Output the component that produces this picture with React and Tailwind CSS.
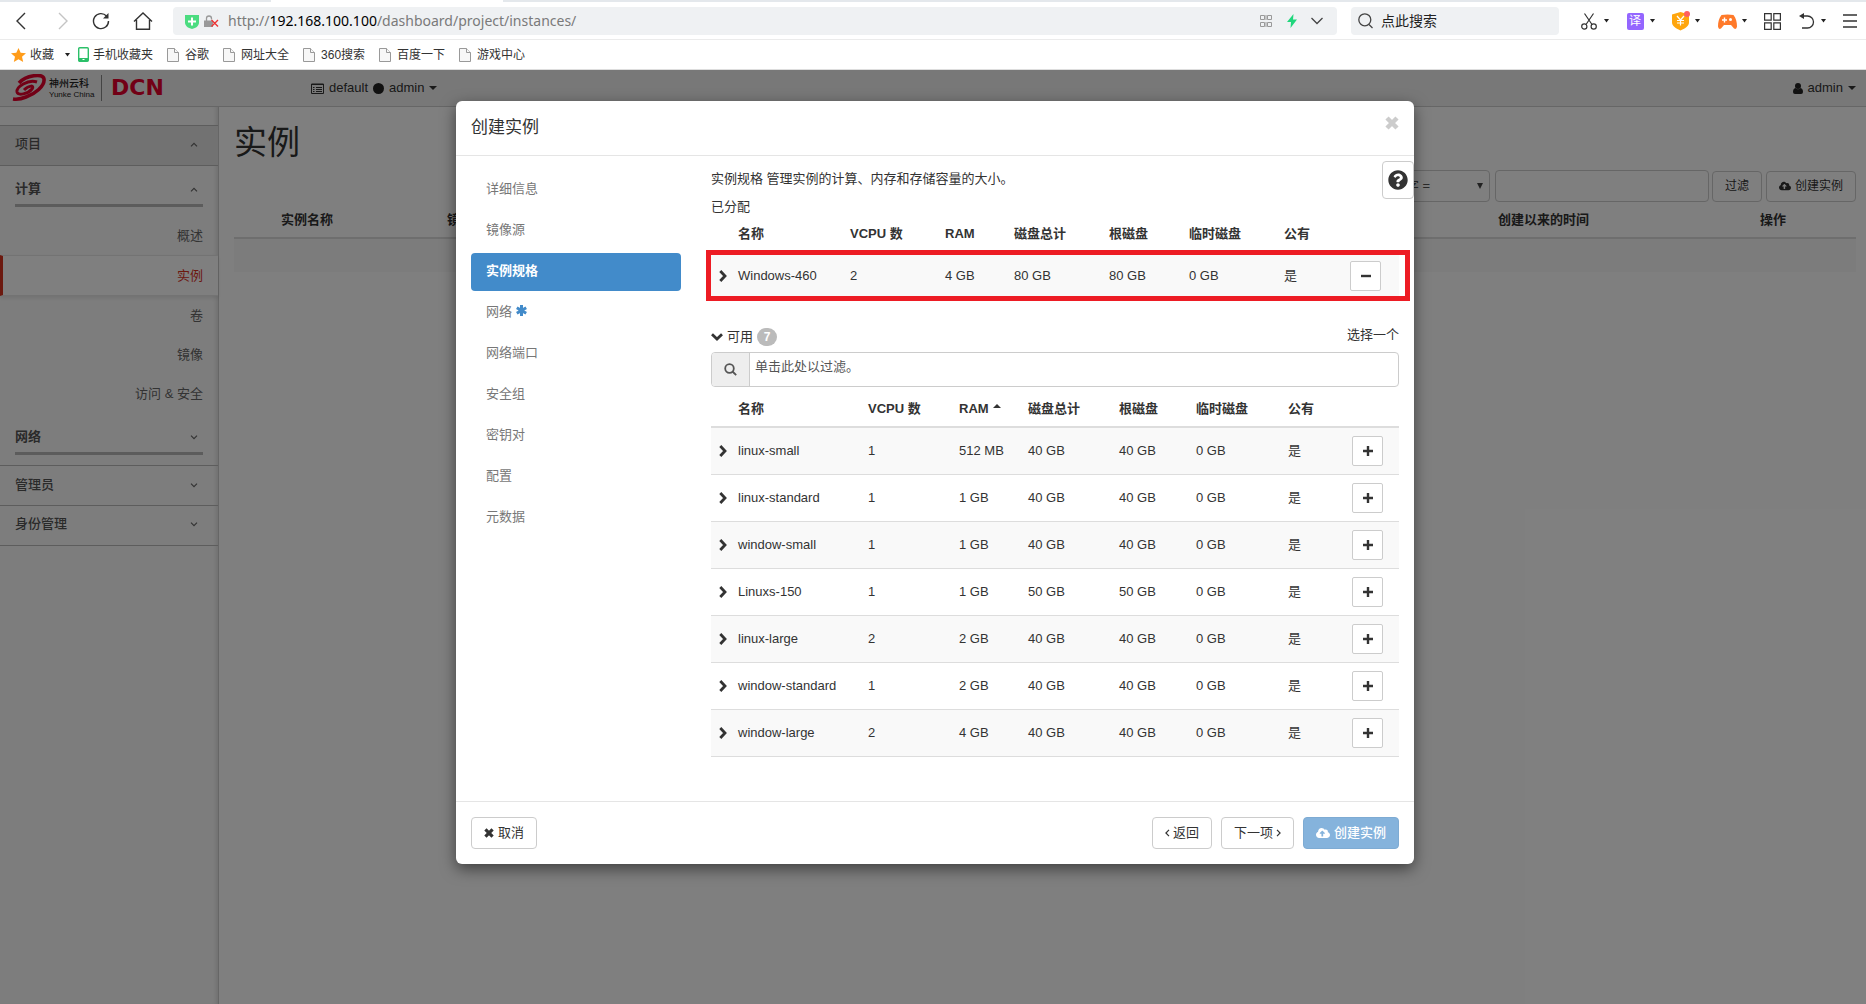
import React, { useState } from "react";
import { FaCloudUploadAlt, FaQuestionCircle } from "react-icons/fa";

const bookmarks = ["谷歌", "网址大全", "360搜索", "百度一下", "游戏中心"];

const steps = [
  { name: "详细信息" },
  { name: "镜像源" },
  { name: "实例规格" },
  { name: "网络", required: true },
  { name: "网络端口" },
  { name: "安全组" },
  { name: "密钥对" },
  { name: "配置" },
  { name: "元数据" },
];

const allocated = [["Windows-460", "2", "4 GB", "80 GB", "80 GB", "0 GB", "是"]];

const available = [
  ["linux-small", "1", "512 MB", "40 GB", "40 GB", "0 GB", "是"],
  ["linux-standard", "1", "1 GB", "40 GB", "40 GB", "0 GB", "是"],
  ["window-small", "1", "1 GB", "40 GB", "40 GB", "0 GB", "是"],
  ["Linuxs-150", "1", "1 GB", "50 GB", "50 GB", "0 GB", "是"],
  ["linux-large", "2", "2 GB", "40 GB", "40 GB", "0 GB", "是"],
  ["window-standard", "1", "2 GB", "40 GB", "40 GB", "0 GB", "是"],
  ["window-large", "2", "4 GB", "40 GB", "40 GB", "0 GB", "是"],
];

const columns = ["名称", "VCPU 数", "RAM", "磁盘总计", "根磁盘", "临时磁盘", "公有"];

const allocatedWidths = [
  "w-[27px]",
  "w-[112px]",
  "w-[95px]",
  "w-[69px]",
  "w-[95px]",
  "w-[80px]",
  "w-[95px]",
  "w-[66px]",
  "w-auto",
];

const availableWidths = [
  "w-[27px]",
  "w-[130px]",
  "w-[91px]",
  "w-[69px]",
  "w-[91px]",
  "w-[77px]",
  "w-[92px]",
  "w-[64px]",
  "w-auto",
];

function Caret() {
  return (
    <svg width="5" height="4" viewBox="0 0 5 4" className="fill-[#222]">
      <path d="M0 0h5L2.500 3.500z" />
    </svg>
  );
}

function MenuCaret() {
  return (
    <svg width="8" height="4" viewBox="0 0 8 4" className="fill-[#333]">
      <path d="M0 0h8L4 4z" />
    </svg>
  );
}

function Cross({ className }) {
  return (
    <svg viewBox="0 0 14 14" fill="none" stroke="currentColor" strokeWidth="4.500" className={className}>
      <path d="m2 2 10 10M12 2 2 12" />
    </svg>
  );
}

function Chevron({ down }) {
  return down ? (
    <svg width="12" height="8" viewBox="0 0 12 8" fill="none" stroke="#333" strokeWidth="2.800">
      <path d="m1 1.300 5 4.700 5-4.700" />
    </svg>
  ) : (
    <svg width="8" height="12" viewBox="0 0 8 12" fill="none" stroke="#333" strokeWidth="2.800">
      <path d="m1.300 1 4.700 5-4.700 5" />
    </svg>
  );
}

function Angle({ left }) {
  return (
    <svg width="5" height="8" viewBox="0 0 5 8" fill="none" stroke="#333" strokeWidth="1.200">
      <path d={left ? "M4 .8.900 4 4 7.200" : "M1 .8 4.100 4 1 7.200"} />
    </svg>
  );
}

function AngleSmall({ up }) {
  return (
    <svg width="8" height="5" viewBox="0 0 8 5" fill="none" stroke="#666" strokeWidth="1.200">
      <path d={up ? "m1 4.300 3-3 3 3" : "m1 .7 3 3 3-3"} />
    </svg>
  );
}

function PageIcon() {
  return (
    <svg width="12" height="14" viewBox="0 0 12 14" className="fill-[#f7f7f7] stroke-[#999]">
      <path d="M.5.5h7l4 4v9H.5z" />
      <path d="M7.500 .5v4h4" />
    </svg>
  );
}

function AddressBar() {
  return (
    <div className="flex h-[38px] items-center border-b border-[#ebebeb] pt-px pr-[9px] pl-4 text-[#222]">
      <div className="flex w-[157px] items-center gap-[23px]">
        <button aria-label="后退">
          <svg width="11" height="18" viewBox="0 0 11 18" fill="none" stroke="#333" strokeWidth="1.400">
            <path d="M9 1 1 9l8 8" />
          </svg>
        </button>
        <button aria-label="前进" className="ml-2">
          <svg width="11" height="18" viewBox="0 0 11 18" fill="none" stroke="#c4c4c4" strokeWidth="1.400">
            <path d="m1 1 8 8-8 8" />
          </svg>
        </button>
        <button aria-label="刷新">
          <svg width="18" height="18" viewBox="0 0 18 18" fill="none" stroke="#333" strokeWidth="1.400">
            <path d="M14.500 4A7.500 7.500 0 1 0 16.500 9" />
            <path d="M16.500 1v5.500H11z" fill="#333" stroke="none" />
          </svg>
        </button>
        <button aria-label="主页">
          <svg width="20" height="18" viewBox="0 0 20 18" fill="none" stroke="#333" strokeWidth="1.400">
            <path d="M1 9.500 10 1l9 8.500M3.500 8v9.200h13V8" />
          </svg>
        </button>
      </div>
      <div className="flex h-7 flex-1 items-center rounded bg-[#eff1f3] pr-[14px] pl-3">
        <svg width="14" height="15" viewBox="0 0 14 15" className="shrink-0">
          <path d="M0 1h14v7.500c0 3.500-3 5.500-7 6.500-4-1-7-3-7-6.500z" fill="#4bdc80" />
          <path d="M7 3.500v8M3 7.500h8" stroke="#fff" strokeWidth="2" />
        </svg>
        <svg width="15" height="13" viewBox="0 0 15 13" className="ml-[5px] shrink-0">
          <path d="M2.500 6V3.500a2.500 2.500 0 0 1 5 0v1" fill="none" stroke="#999" strokeWidth="1.300" />
          <path d="M0 5.500h9V12H0z" fill="#999" />
          <path d="m7.500 5 6.500 6.500m0-6.500-6.500 6.500" stroke="#e33" strokeWidth="1.400" />
        </svg>
        <span className="ml-[9px] flex-1 font-['Noto_Sans','Noto_Sans_CJK_SC',sans-serif] text-sm text-[#7a7a7a]">
          http://<span className="text-black">192.168.100.100</span>/dashboard/project/instances/
        </span>
        <svg width="12" height="12" viewBox="0 0 12 12" fill="none" stroke="#999">
          <path d="M.5.5h4v4h-4zM7.500.5h4v4h-4zM.5 7.500h4v4h-4zM7.500 7.500h4v4h-4zM6 0v5M6 7v5" />
        </svg>
        <svg width="10" height="14" viewBox="0 0 10 14" className="ml-[15px] fill-[#1fd67c]">
          <path d="M6.500 0 0 8h4L3.500 14 10 5.500H6z" />
        </svg>
        <svg width="12" height="8" viewBox="0 0 12 8" fill="none" stroke="#444" strokeWidth="1.300" className="ml-[14px]">
          <path d="m.5 1 5.500 5.500L11.500 1" />
        </svg>
      </div>
      <label className="ml-[14px] flex h-7 w-[208px] items-center gap-2 rounded bg-[#eff1f3] pl-[7px]">
        <svg width="15" height="16" viewBox="0 0 15 16" fill="none" stroke="#444" strokeWidth="1.300">
          <circle cx="6.800" cy="6.800" r="6" />
          <path d="m11 11.500 3.500 3.500" />
        </svg>
        <input
          aria-label="搜索"
          placeholder="点此搜索"
          className="w-32 bg-transparent text-sm outline-none placeholder:text-[#222]"
        />
      </label>
      <div className="flex w-[298px] items-center justify-between pl-[22px]">
        <button aria-label="截图" className="flex items-center gap-[7px]">
          <svg width="16" height="17" viewBox="0 0 16 17" fill="none" stroke="#333" strokeWidth="1.200">
            <path d="m3.500.5 7.500 11M12.500.5 5 11.500" />
            <circle cx="3.300" cy="13.500" r="2.600" />
            <circle cx="12.700" cy="13.500" r="2.600" />
          </svg>
          <Caret />
        </button>
        <button aria-label="翻译" className="flex items-center gap-[6px]">
          <span className="flex h-[17px] w-[17px] items-center justify-center rounded-xs bg-[#9466ff] text-xs leading-none text-white">
            译
          </span>
          <Caret />
        </button>
        <button aria-label="钱包" className="flex items-center gap-[5px]">
          <svg width="18" height="20" viewBox="0 0 18 20">
            <path d="M0 3.500 8.500 1 17 3.500V11c0 4-3 6-8.500 8.500C3 17 0 15 0 11z" fill="#ffa60d" />
            <path d="m5 5 3.500 4L12 5M8.500 9v5.500M5 9.500h7M5 12h7" stroke="#fff" strokeWidth="1.200" fill="none" />
            <circle cx="15" cy="3" r="3" fill="#ff5f5f" />
          </svg>
          <Caret />
        </button>
        <button aria-label="游戏" className="flex items-center gap-[5px]">
          <svg width="19" height="15" viewBox="0 0 19 15">
            <path d="M3.500 1q6-1 12 0C18 4 19 8 19 12.500q-.5 3.500-3 2L13 11H6l-3 3.500q-2.500 1.500-3-2C0 8 1 4 3.500 1z" fill="#ff7a2a" />
            <path d="M6.500 3.500v5M4 6h5" stroke="#fff" strokeWidth="1.400" />
            <circle cx="12.500" cy="5.500" r="1.500" fill="#fff" />
          </svg>
          <Caret />
        </button>
        <button aria-label="应用">
          <svg width="17" height="17" viewBox="0 0 17 17" fill="none" stroke="#333" strokeWidth="1.200">
            <path d="M.6.6h6.600v6.600H.6zM9.800.6h6.600v6.600H9.800zM.6 9.800h6.600v6.600H.6zM9.800 9.800h6.600v6.600H9.800z" />
          </svg>
        </button>
        <button aria-label="撤销" className="flex items-center gap-[6px]">
          <svg width="16" height="16" viewBox="0 0 16 16" fill="none" stroke="#333" strokeWidth="1.300">
            <path d="M2 3h6.500a6 6 0 0 1 0 12H3" />
            <path d="M5 0v6L0 3z" fill="#333" stroke="none" />
          </svg>
          <Caret />
        </button>
        <button aria-label="菜单">
          <svg width="14" height="14" viewBox="0 0 14 14" fill="none" stroke="#333" strokeWidth="1.400">
            <path d="M0 1h14M0 7h14M0 13h14" />
          </svg>
        </button>
      </div>
    </div>
  );
}

function Bookmarks() {
  return (
    <nav className="flex h-[30px] items-center border-b border-[#ddd] pl-[11px] text-xs text-[#333]">
      <a href="#fav" className="flex items-center gap-1">
        <svg width="15" height="14" viewBox="0 0 15 14" className="fill-[#ff9c1a]">
          <path d="m7.500 0 2.200 4.800 5.300.5-4 3.500 1.200 5.200-4.700-2.700L2.800 14 4 8.800 0 5.300l5.300-.5z" />
        </svg>
        收藏
      </a>
      <span className="mr-2 ml-[11px]">
        <Caret />
      </span>
      <a href="#mobile" className="flex items-center gap-1">
        <svg width="11" height="15" viewBox="0 0 11 15">
          <rect x=".7" y=".7" width="9.600" height="13.600" rx="1" fill="#fff" stroke="#2cc069" strokeWidth="1.400" />
          <path d="M1 11h9v3H1z" fill="#2cc069" />
          <path d="M4.500 12.500h2" stroke="#fff" />
        </svg>
        手机收藏夹
      </a>
      {bookmarks.map((name) => (
        <a key={name} href="#bookmark" className="ml-[14px] flex items-center gap-[6px]">
          <PageIcon />
          {name}
        </a>
      ))}
    </nav>
  );
}

function Logo() {
  return (
    <div className="flex items-center text-[#222]">
      <svg width="34" height="28" viewBox="0 0 34 28" fill="none" stroke="#e5002d">
        <path d="M7 9C14 1 31-1 32 5c1 7-9 15-18 18q-7 3-13 2" strokeWidth="3.600" />
        <path d="M25 8C16 5 4 13 5 18c1 4 11 2 15-3 3-4-3-4-8 1" strokeWidth="3" />
      </svg>
      <div className="ml-[3px] w-[43px] text-[10px] leading-[12px] font-medium whitespace-nowrap">
        神州云科
        <div className="text-[8px] leading-[9px]">Yunke China</div>
      </div>
      <div className="mx-[9px] h-[26px] w-px bg-[#888]" />
      <span className="font-['DejaVu_Sans',sans-serif] text-[22px] leading-6 font-bold text-[#e5002d]">DCN</span>
    </div>
  );
}

function SideGroup({ name, open }) {
  return (
    <button className="mx-[15px] flex items-center justify-between border-b-[3px] border-[#b8b8b8] pr-[5px] pb-[6px] font-bold text-[#555]">
      {name}
      <AngleSmall up={open} />
    </button>
  );
}

function Sidebar() {
  return (
    <aside className="flex w-[219px] shrink-0 flex-col border-r border-[#ccc] bg-[#fbfbfb] pt-[18px] text-[13px] leading-[18px] text-[#666] shadow-[inset_-4px_0_5px_-3px_rgba(0,0,0,0.15)]">
      <button className="flex h-[41px] items-center justify-between border-y border-[#bbb] bg-[#e4e4e4] pr-5 pb-[3px] pl-[15px] font-medium text-[#555]">
        项目
        <AngleSmall up />
      </button>
      <div className="flex flex-col pt-[14px]">
        <SideGroup name="计算" open />
        <a href="#overview" className="flex h-12 items-center justify-end pt-[9px] pr-[15px]">
          概述
        </a>
        <a
          href="#instances"
          className="flex h-[41px] items-center justify-end border-y border-l-[3px] border-y-[#e6e6e6] border-l-[#d9331f] bg-white pr-[15px] text-[#d9331f] shadow-[0_2px_4px_rgba(0,0,0,0.1)]"
        >
          实例
        </a>
        <a href="#volumes" className="flex h-[39px] items-center justify-end pr-[15px]">
          卷
        </a>
        <a href="#images" className="flex h-[39px] items-center justify-end pr-[15px]">
          镜像
        </a>
        <a href="#access" className="mb-[15px] flex h-[39px] items-center justify-end pr-[15px]">
          访问 &amp; 安全
        </a>
        <SideGroup name="网络" />
      </div>
      <button className="mt-[10px] flex h-10 items-center justify-between border-t border-[#bbb] pr-5 pb-px pl-[15px] font-medium text-[#555]">
        管理员
        <AngleSmall />
      </button>
      <button className="flex h-[41px] items-center justify-between border-y border-[#bbb] pr-5 pb-[3px] pl-[15px] font-medium text-[#555]">
        身份管理
        <AngleSmall />
      </button>
    </aside>
  );
}

function Dashboard() {
  return (
    <div className="flex flex-1 flex-col bg-white text-[13px] text-[#333]">
      <header className="flex h-[37px] items-center border-b border-[#ccc] bg-[#f0f0f0] pr-[10px] pl-3">
        <div className="w-[299px]">
          <Logo />
        </div>
        <button className="flex items-center gap-[5px]">
          <svg width="13" height="11" viewBox="0 0 13 11" fill="none" stroke="#333">
            <path d="M.5 1h12v9.500H.5zM.5 1.500h12M2 4.500h1.500M5 4.500h6M2 6.500h1.500M5 6.500h6M2 8.500h1.500M5 8.500h6" />
          </svg>
          default
          <span className="size-[11px] rounded-full bg-[#222]" />
          admin
          <MenuCaret />
        </button>
        <button className="ml-auto flex items-center gap-[5px]">
          <svg width="10" height="11" viewBox="0 0 10 11" className="fill-[#222]">
            <circle cx="5" cy="3" r="3" />
            <path d="M2.500 5Q5 7.500 7.500 5 10 5.500 10 9q0 2-2 2H2q-2 0-2-2 0-3.500 2.500-4z" />
          </svg>
          admin
          <MenuCaret />
        </button>
      </header>
      <div className="flex flex-1">
        <Sidebar />
        <main className="flex-1 pt-3 pr-[10px] pl-[15px]">
          <h1 className="text-[33px] leading-[48px]">实例</h1>
          <div className="mt-[3px] flex items-center justify-end">
            <select
              aria-label="过滤条件"
              className="h-8 w-[130px] appearance-none rounded border border-[#ccc] bg-white pl-[6px] text-[#555]"
            >
              <option>实例名字 =</option>
            </select>
            <svg width="6" height="6" viewBox="0 0 6 6" className="-ml-[13px] fill-[#444]">
              <path d="M0 0h6L3 6z" />
            </svg>
            <input aria-label="过滤值" className="ml-[12px] h-8 w-[214px] rounded border border-[#ccc]" />
            <button className="ml-[3px] h-[31px] rounded border border-[#ccc] px-3 text-xs">过滤</button>
            <button className="ml-1 flex h-[31px] items-center gap-1 rounded border border-[#ccc] px-3 text-xs">
              <FaCloudUploadAlt className="size-3" />
              创建实例
            </button>
          </div>
          <table className="w-full table-fixed">
            <thead>
              <tr className="h-[36px] border-b-2 border-[#ddd] text-left leading-[18px]">
                <th className="w-[47px]" />
                <th className="w-[166px]">实例名称</th>
                <th>镜像</th>
                <th className="w-[262px]">创建以来的时间</th>
                <th className="w-24">操作</th>
              </tr>
            </thead>
            <tbody>
              <tr className="h-[34px] bg-[#f9f9f9]">
                <td colSpan="5" />
              </tr>
            </tbody>
          </table>
        </main>
      </div>
    </div>
  );
}

function FlavorTable({ rows, widths, sorted, remove }) {
  return (
    <table className="w-full table-fixed text-left">
      <colgroup>
        {widths.map((width, i) => (
          <col key={i} className={width} />
        ))}
      </colgroup>
      <thead>
        <tr className={sorted ? "h-10 border-b-2 border-[#ddd]" : "h-9"}>
          <th />
          {columns.map((name) => (
            <th key={name} className={sorted ? "pt-1 whitespace-nowrap" : "whitespace-nowrap"}>
              {name}
              {sorted && name === "RAM" && (
                <svg width="8" height="4" viewBox="0 0 8 4" className="mb-[6px] ml-1 inline fill-[#333]">
                  <path d="M0 4h8L4 0z" />
                </svg>
              )}
            </th>
          ))}
          <th />
        </tr>
      </thead>
      <tbody>
        {rows.map((row, i) => (
          <tr
            key={row[0]}
            className={`h-[47px] ${i % 2 === 0 ? "bg-[#f9f9f9]" : "bg-white"} ${
              remove ? "" : "border-b border-[#ddd]"
            }`}
          >
            <td className="pl-2">
              <Chevron />
            </td>
            {row.map((value, j) => (
              <td key={j} className="whitespace-nowrap">
                {value}
              </td>
            ))}
            <td>
              <button
                aria-label={remove ? "移除" : "添加"}
                className="flex h-[30px] w-[31px] items-center justify-center rounded-xs border border-[#ccc] bg-white"
              >
                <svg width="10" height="10" viewBox="0 0 10 10" stroke="#333" strokeWidth="2.400">
                  <path d={remove ? "M0 5h10" : "M0 5h10M5 0v10"} />
                </svg>
              </button>
            </td>
          </tr>
        ))}
      </tbody>
    </table>
  );
}

function LaunchModal() {
  const [active, setActive] = useState("实例规格");

  return (
    <div
      role="dialog"
      aria-label="创建实例"
      className="relative flex w-full max-w-[958px] flex-col rounded-md bg-white text-[13px] leading-[18px] text-[#333] shadow-[0_5px_15px_rgba(0,0,0,0.5)]"
    >
      <div className="flex h-[55px] items-start justify-between border-b border-[#e5e5e5] px-[15px] pt-[15px]">
        <h4 className="text-[17px] leading-6">创建实例</h4>
        <button aria-label="关闭" className="text-[#ccc]">
          <Cross className="size-[14px]" />
        </button>
      </div>
      <div className="flex min-h-[645px] px-[15px]">
        <nav className="flex w-[210px] shrink-0 flex-col gap-[3px] pt-[15px]">
          {steps.map((step) => (
            <button
              key={step.name}
              onClick={() => setActive(step.name)}
              className={`flex h-[38px] items-center gap-1 rounded px-[15px] pb-[2px] ${
                active === step.name ? "bg-[#428bca] font-bold text-white" : "text-[#777]"
              }`}
            >
              {step.name}
              {step.required && (
                <svg width="11" height="11" viewBox="0 0 11 11" stroke="#428bca" strokeWidth="3" className="mb-1">
                  <path d="M5.500 0v11M.8 2.800l9.400 5.400M10.200 2.800.8 8.200" />
                </svg>
              )}
            </button>
          ))}
        </nav>
        <section className="ml-[30px] flex-1 pt-[14px]">
          <p>实例规格 管理实例的计算、内存和存储容量的大小。</p>
          <p className="mt-[10px]">已分配</p>
          <div className="relative">
            <FlavorTable rows={allocated} widths={allocatedWidths} remove />
            <div className="pointer-events-none absolute -right-[11px] -bottom-[2px] -left-[5px] h-[51px] border-5 border-[#ed1c24]" />
          </div>
          <div className="mt-7 flex h-[19px] items-center justify-between">
            <button className="flex items-center gap-1">
              <Chevron down />
              可用
              <span className="flex h-[18px] w-5 items-center justify-center rounded-full bg-[#bbb] text-xs font-bold text-white">
                7
              </span>
            </button>
            <span className="pb-1">选择一个</span>
          </div>
          <label className="mt-[6px] flex h-[35px] overflow-hidden rounded border border-[#ccc]">
            <span className="flex w-[38px] items-center justify-center border-r border-[#ccc] bg-[#eee]">
              <svg width="13" height="13" viewBox="0 0 13 13" fill="none" stroke="#555" strokeWidth="1.800">
                <circle cx="5.500" cy="5.500" r="4.300" />
                <path d="m8.500 8.500 3.700 3.700" />
              </svg>
            </span>
            <input
              aria-label="过滤"
              placeholder="单击此处以过滤。"
              className="flex-1 px-[5px] pb-[5px] outline-none placeholder:text-[#555]"
            />
          </label>
          <FlavorTable rows={available} widths={availableWidths} sorted />
        </section>
        <button
          aria-label="帮助"
          className="absolute top-15 right-0 flex h-[38px] w-8 items-center justify-center rounded border border-[#ccc] bg-white"
        >
          <FaQuestionCircle className="size-5" />
        </button>
      </div>
      <div className="flex h-[63px] items-center gap-[9px] border-t border-[#e5e5e5] px-[15px]">
        <button className="mr-auto flex h-8 items-center gap-1 rounded border border-[#ccc] px-3">
          <Cross className="size-[10px]" />
          取消
        </button>
        <button className="flex h-8 items-center gap-[3px] rounded border border-[#ccc] px-3">
          <Angle left />
          返回
        </button>
        <button className="flex h-8 items-center gap-[3px] rounded border border-[#ccc] px-3">
          下一项
          <Angle />
        </button>
        <button className="flex h-8 items-center gap-1 rounded border border-[#7eabd3] bg-[#85b3dc] px-3 font-medium text-white">
          <FaCloudUploadAlt className="size-[14px]" />
          创建实例
        </button>
      </div>
    </div>
  );
}

export default function App() {
  return (
    <div className="flex min-h-screen flex-col bg-white font-['Liberation_Sans','Noto_Sans_CJK_SC',sans-serif]">
      <div className="flex h-[2px] bg-[#e4e8ec]">
        <div className="ml-[271px] w-[232px] bg-white" />
      </div>
      <AddressBar />
      <Bookmarks />
      <div className="relative flex flex-1 flex-col">
        <Dashboard />
        <div className="absolute inset-0 flex items-start justify-center bg-black/50 pt-[31px] pl-1">
          <LaunchModal />
        </div>
      </div>
    </div>
  );
}
